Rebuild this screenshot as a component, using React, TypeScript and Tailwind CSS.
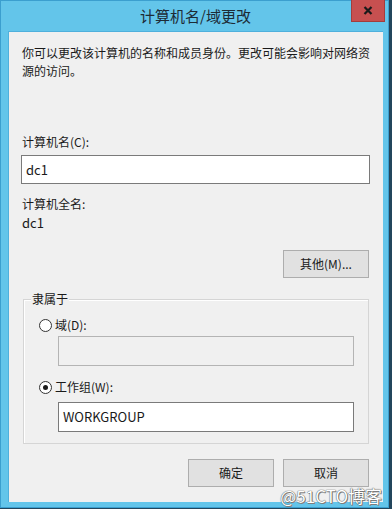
import React from "react";

const font = { fontFamily: '"Noto Sans CJK SC", "Noto Sans", sans-serif' };

function Radio({ checked }: { checked?: boolean }) {
  return (
    <span className="w-[13px] h-[13px] rounded-full border border-[#333333] bg-white flex items-center justify-center shrink-0">
      {checked && <span className="w-[5px] h-[5px] rounded-full bg-[#1a1a1a]" />}
    </span>
  );
}

function Btn({ children }: { children: React.ReactNode }) {
  return (
    <div className="w-[86px] h-[28px] bg-[#e1e1e1] border border-[#adadad] flex items-center justify-center text-[12px] text-[#1a1a1a]">
      {children}
    </div>
  );
}

export default function App() {
  return (
    <div className="w-[392px] h-[509px] bg-[#23465c] overflow-hidden" style={font}>
      <div className="relative w-[389px] h-[508px] bg-[#63c5ea] border border-[#3b9fcf] flex flex-col pl-[7px] pr-[5px] pb-[5px]">
        {/* Title bar */}
        <div className="h-[30px] flex items-center justify-center text-[15px] text-[#1d2b36]">
          计算机名/域更改
        </div>
        <div className="absolute right-[3px] top-[-1px] w-[34px] h-[22px] bg-[#c75050] border border-[#a33d3d] border-t-0 flex items-center justify-center">
          <svg width="10" height="9" viewBox="0 0 10 9">
            <path d="M1.5 1 L8.5 8 M8.5 1 L1.5 8" stroke="#1a1a1a" strokeWidth="2.2" />
          </svg>
        </div>

        {/* Client area */}
        <div className="flex-1 bg-[#f0f0f0] border-t border-l border-[#4fb0dc] flex flex-col pt-[12px] pl-[12px] pr-[13px] text-[12px] leading-[18px] text-[#1a1a1a]">
          <p className="pl-[1px]">
            你可以更改该计算机的名称和成员身份。更改可能会影响对网络资源的访问。
          </p>

          <div className="mt-[53px] pl-[1px]">计算机名(C):</div>
          <div className="mt-[4px] h-[29px] bg-white border border-[#7a7a7a] flex items-center px-[4px] text-[13px]">
            dc1
          </div>

          <div className="mt-[11px] pl-[1px]">计算机全名:</div>
          <div className="mt-[1px] pl-[1px] text-[13px]">dc1</div>

          <div className="mt-[18px] self-end mr-[1px]">
            <Btn>其他(M)...</Btn>
          </div>

          {/* Group box */}
          <div className="relative mt-[21px] ml-[2px] mr-[1px] h-[145px] border border-[#d5d5d5] shadow-[inset_1px_1px_0_#ffffff] flex flex-col">
            <span className="absolute left-[7px] top-[-10px] bg-[#f0f0f0] px-[1px]">隶属于</span>
            <div className="mt-[16px] ml-[15px] flex items-center gap-[3px]">
              <Radio />
              <span>域(D):</span>
            </div>
            <div className="mt-[2px] ml-[34px] w-[296px] h-[30px] bg-[#f0f0f0] border border-[#b4b4b4]" />
            <div className="mt-[12px] ml-[15px] flex items-center gap-[3px]">
              <Radio checked />
              <span>工作组(W):</span>
            </div>
            <div className="mt-[6px] ml-[34px] w-[296px] h-[30px] bg-white border border-[#7a7a7a] flex items-center px-[4px] text-[13px]">
              WORKGROUP
            </div>
          </div>

          <div className="mt-[15px] flex justify-end gap-[9px] mr-[1px]">
            <Btn>确定</Btn>
            <Btn>取消</Btn>
          </div>
        </div>

        {/* Watermark */}
        <div className="absolute right-[6px] bottom-[1px] text-[17px] leading-[20px] text-white [text-shadow:0_0_1px_#555,0_0_1px_#555,1px_1px_0_#888]">
          @51CTO博客
        </div>
      </div>
    </div>
  );
}
